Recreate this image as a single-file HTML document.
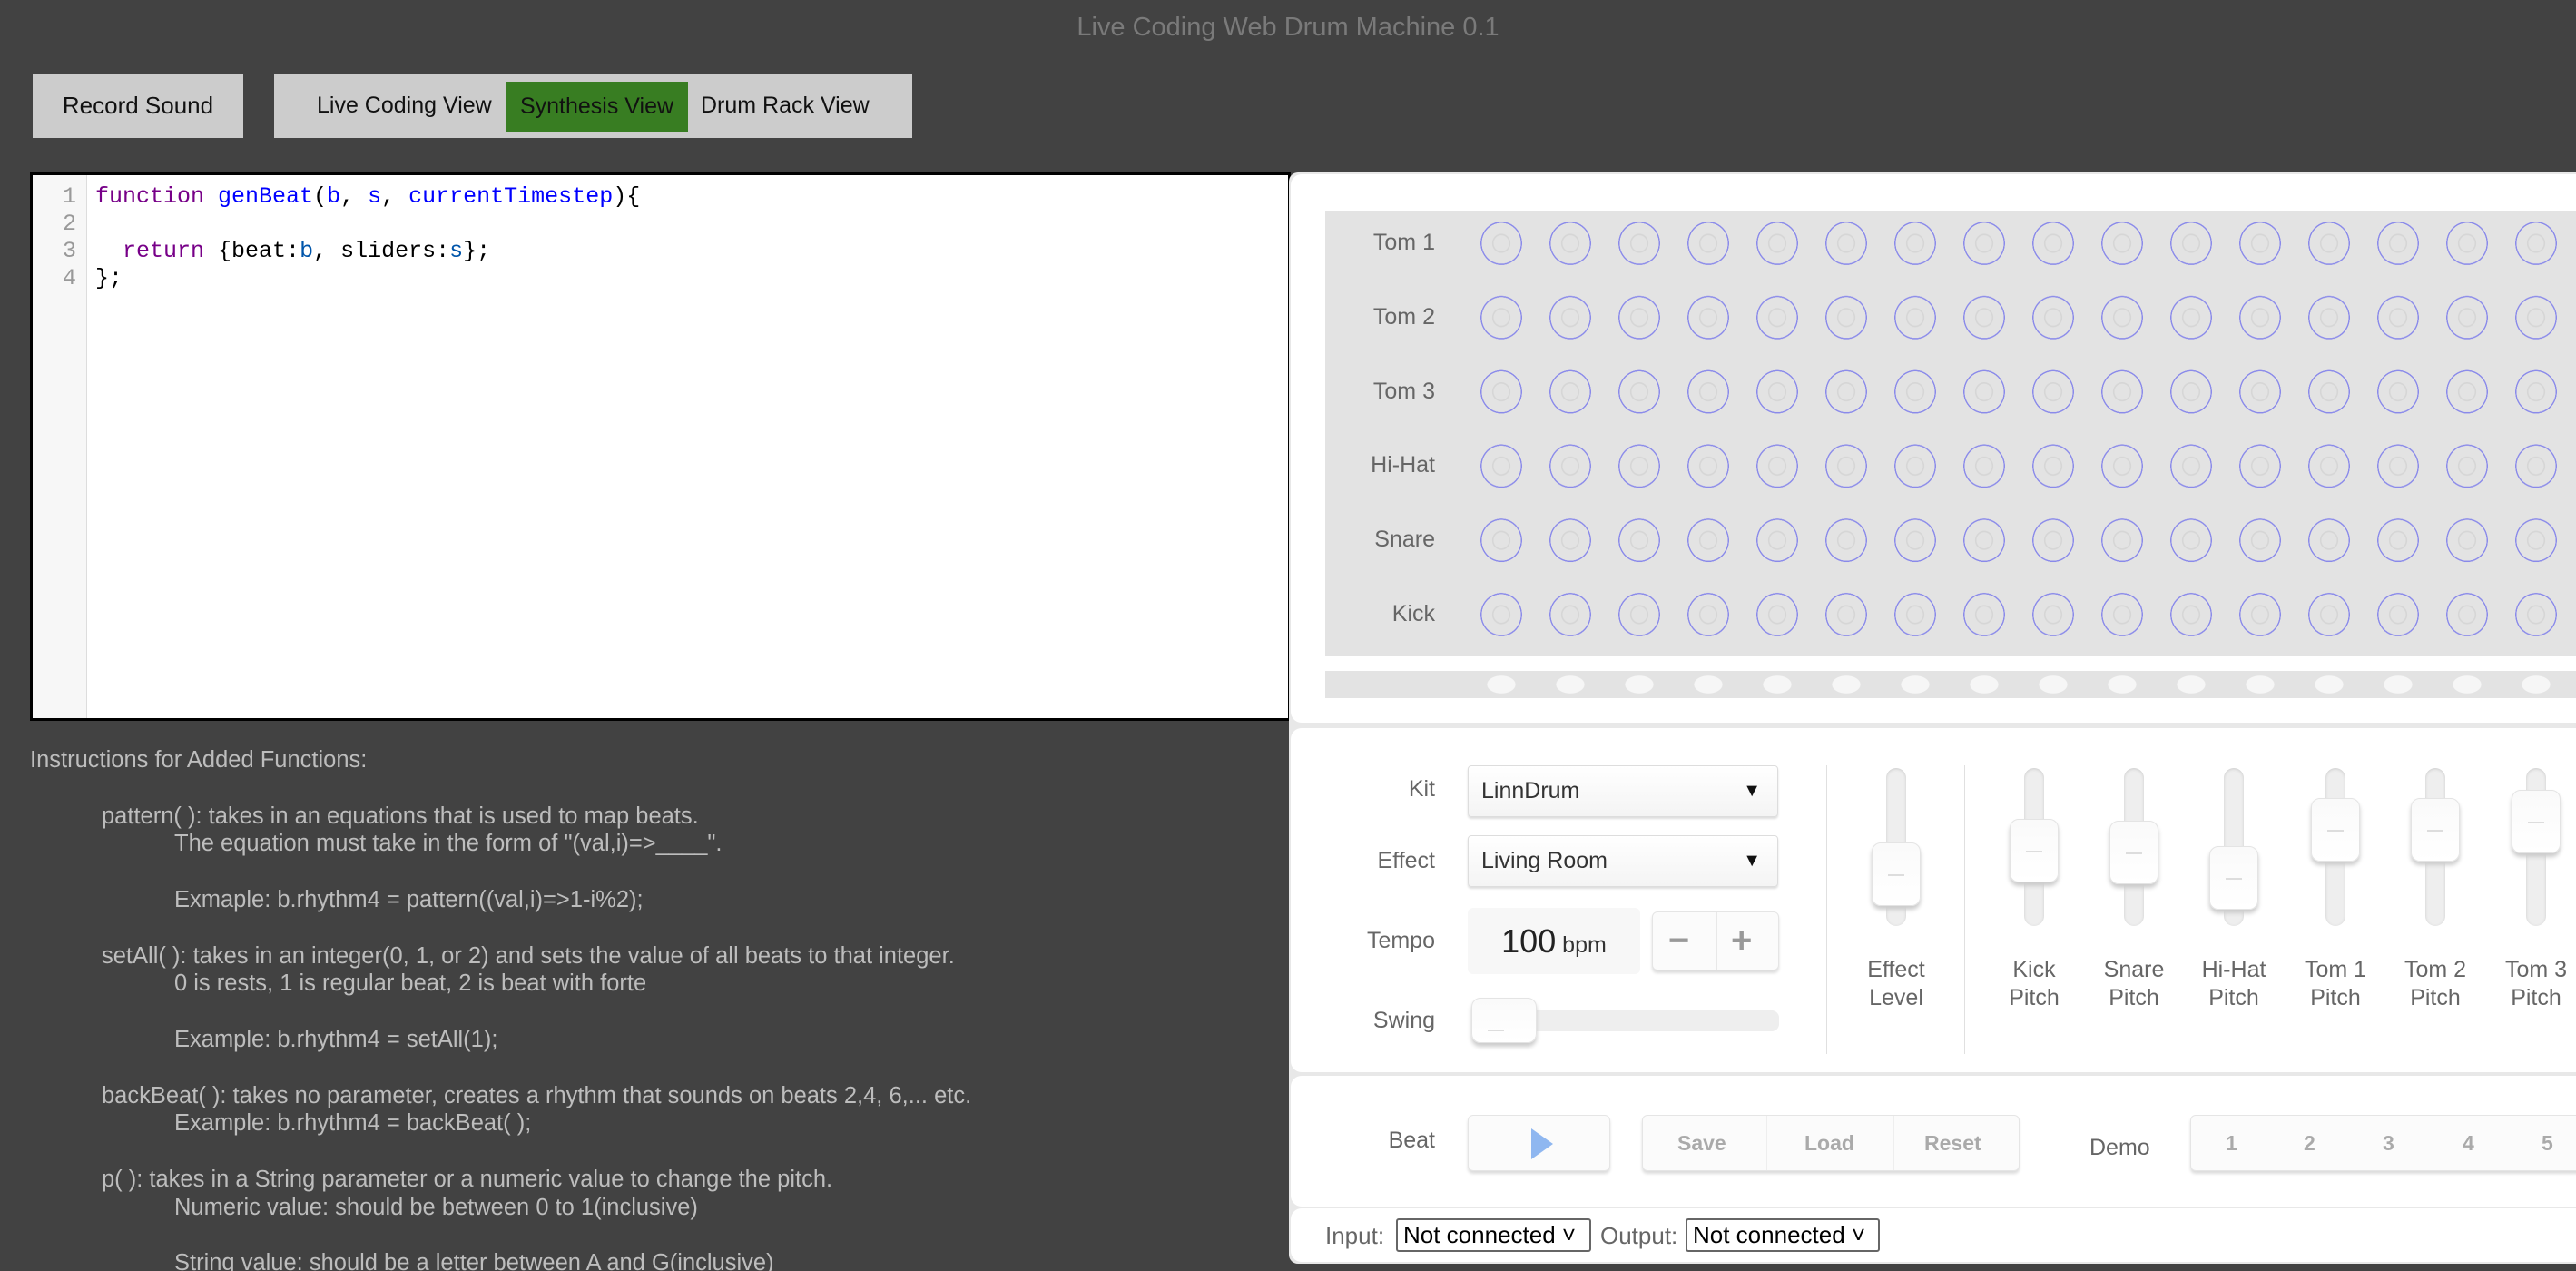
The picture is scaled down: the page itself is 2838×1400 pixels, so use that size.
<!DOCTYPE html>
<html><head><meta charset="utf-8"><style>
*{box-sizing:border-box;margin:0;padding:0}
html,body{width:2838px;height:1400px;overflow:hidden}
body{background:#424242;position:relative;font-family:"Liberation Sans",sans-serif}
.a{position:absolute}
.title{left:0;width:2838px;top:14px;text-align:center;color:#7a7a7a;font-size:29px;letter-spacing:0px}
.btn{background:#ccc;color:#111;font-size:26px}
.ed{left:33px;top:190px;width:1389px;height:604px;background:#fff;border:3px solid #000}
.gut{left:0;top:0;width:60px;height:100%;background:#f7f7f7;border-right:1px solid #ddd}
.code{font-family:"Liberation Mono",monospace;font-size:25px;line-height:30px}
.ln{color:#999;text-align:right;width:48px;left:0}
.kw{color:#708}.df{color:#00f}.v2{color:#05a}
.ins{left:33px;top:822px;color:#bdbdbd;font-size:25.5px;line-height:30.8px;white-space:nowrap}
.ins div{height:30.8px}
.i1{padding-left:79px}.i2{padding-left:159px}
.panel{background:#fff;border-radius:12px;left:1422px;width:1440px}
.lab{color:#666;font-size:25px;text-align:right;width:150px;left:1431px}
.sel{background:linear-gradient(#fff,#f4f4f4);border:1px solid #ddd;border-radius:4px;box-shadow:0 2px 2px #ddd;font-size:25px;color:#333;padding-left:14px;line-height:54px}
.sel:after{content:"▼";position:absolute;right:18px;top:0;font-size:20px;color:#111}
.trk{width:22px;height:174px;top:846px;background:#eee;border-radius:11px;box-shadow:inset 0 1px 3px #ccc}
.kn{width:54px;height:70px;background:linear-gradient(#fafafa,#fff);border:1px solid #e4e4e4;border-radius:10px;box-shadow:0 4px 5px #ccc}
.kn:after{content:"";position:absolute;left:17px;width:18px;top:34px;height:2px;background:#ddd}
.sl{color:#666;font-size:25px;text-align:center;width:110px;line-height:31px}
.grp{background:#fbfbfb;border:1px solid #e5e5e5;border-radius:6px;box-shadow:0 3px 3px #ddd;color:#aaa;font-weight:bold;font-size:23px}
</style></head><body>
<div class="a title">Live Coding Web Drum Machine 0.1</div>
<div class="a btn" style="left:36px;top:81px;width:232px;height:71px;line-height:71px;text-align:center">Record Sound</div>
<div class="a btn" style="left:302px;top:81px;width:703px;height:71px"></div>
<div class="a btn" style="left:349px;top:81px;line-height:71px;background:none;font-size:25px">Live Coding View</div>
<div class="a" style="left:557px;top:90px;width:201px;height:55px;background:#387d22;color:#111;font-size:25px;line-height:55px;text-align:center">Synthesis View</div>
<div class="a btn" style="left:772px;top:81px;line-height:71px;background:none;font-size:25px">Drum Rack View</div>

<div class="a ed">
<div class="a gut"></div>
<div class="a code ln" style="top:9px">1<br>2<br>3<br>4</div>
<div class="a code" style="left:69px;top:9px;white-space:pre"><span class="kw">function</span> <span class="df">genBeat</span>(<span class="df">b</span>, <span class="df">s</span>, <span class="df">currentTimestep</span>){

  <span class="kw">return</span> {beat:<span class="v2">b</span>, sliders:<span class="v2">s</span>};
};</div>
</div>

<div class="a ins"><div>Instructions for Added Functions:</div><div></div><div class="i1">pattern( ): takes in an equations that is used to map beats.</div><div class="i2">The equation must take in the form of "(val,i)=&gt;____".</div><div></div><div class="i2">Exmaple: b.rhythm4 = pattern((val,i)=&gt;1-i%2);</div><div></div><div class="i1">setAll( ): takes in an integer(0, 1, or 2) and sets the value of all beats to that integer.</div><div class="i2">0 is rests, 1 is regular beat, 2 is beat with forte</div><div></div><div class="i2">Example: b.rhythm4 = setAll(1);</div><div></div><div class="i1">backBeat( ): takes no parameter, creates a rhythm that sounds on beats 2,4, 6,... etc.</div><div class="i2">Example: b.rhythm4 = backBeat( );</div><div></div><div class="i1">p( ): takes in a String parameter or a numeric value to change the pitch.</div><div class="i2">Numeric value: should be between 0 to 1(inclusive)</div><div></div><div class="i2">String value: should be a letter between A and G(inclusive)</div></div>

<div class="a" style="left:1420px;top:190px;width:1418px;height:1202px;background:#e8e8e8;border-radius:10px 0 0 10px"></div>
<div class="a panel" style="top:192px;height:604px"></div>
<div class="a" style="left:1460px;top:232px;width:1378px;height:491px;background:#e3e3e3"></div>
<div class="a" style="left:1616px;top:227px;width:1222px;height:491px;background:radial-gradient(ellipse 23px 24px at 38px 41px,transparent 36%,#d6d6d6 38%,#d6d6d6 43%,transparent 45%,transparent 93%,#8a8aea 94%,#8a8aea 99%,transparent 100%);background-size:76px 81.8px"></div>
<div class="a lab" style="top:253px">Tom 1</div>
<div class="a lab" style="top:335px">Tom 2</div>
<div class="a lab" style="top:417px">Tom 3</div>
<div class="a lab" style="top:498px">Hi-Hat</div>
<div class="a lab" style="top:580px">Snare</div>
<div class="a lab" style="top:662px">Kick</div>
<div class="a" style="left:1460px;top:739px;width:1378px;height:30px;background:#e3e3e3"></div>
<div class="a" style="left:1616px;top:744px;width:1222px;height:20px;background:radial-gradient(ellipse 16px 10px at 38px 10px,#f6f6f6 95%,transparent 100%);background-size:76px 20px"></div>

<div class="a panel" style="top:802px;height:379px"></div>
<div class="a lab" style="top:855px">Kit</div>
<div class="a lab" style="top:934px">Effect</div>
<div class="a lab" style="top:1022px">Tempo</div>
<div class="a lab" style="top:1110px">Swing</div>
<div class="a sel" style="left:1617px;top:843px;width:342px;height:57px">LinnDrum</div>
<div class="a sel" style="left:1617px;top:920px;width:342px;height:57px">Living Room</div>
<div class="a" style="left:1617px;top:1000px;width:190px;height:73px;background:#f7f7f7;border-radius:6px;color:#222;font-size:36px;line-height:73px;text-align:center">100<span style="font-size:25px;color:#333"> bpm</span></div>
<div class="a grp" style="left:1820px;top:1004px;width:140px;height:65px;color:#999;font-size:40px;line-height:62px"><span class="a" style="left:17px">−</span><span class="a" style="left:70px;top:0;width:1px;height:63px;background:#e8e8e8"></span><span class="a" style="left:86px">+</span></div>
<div class="a" style="left:1621px;top:1113px;width:339px;height:23px;background:#eee;border-radius:8px"></div>
<div class="a kn" style="left:1621px;top:1099px;width:72px;height:50px"></div>
<div class="a" style="left:2012px;top:843px;width:1px;height:318px;background:#e0e0e0"></div>
<div class="a" style="left:2164px;top:843px;width:1px;height:318px;background:#e0e0e0"></div>

<div class="a trk" style="left:2078px"></div><div class="a kn" style="left:2062px;top:928px"></div>
<div class="a trk" style="left:2230px"></div><div class="a kn" style="left:2214px;top:902px"></div>
<div class="a trk" style="left:2340px"></div><div class="a kn" style="left:2324px;top:904px"></div>
<div class="a trk" style="left:2450px"></div><div class="a kn" style="left:2434px;top:932px"></div>
<div class="a trk" style="left:2562px"></div><div class="a kn" style="left:2546px;top:879px"></div>
<div class="a trk" style="left:2672px"></div><div class="a kn" style="left:2656px;top:879px"></div>
<div class="a trk" style="left:2783px"></div><div class="a kn" style="left:2767px;top:870px"></div>

<div class="a sl" style="left:2034px;top:1053px">Effect<br>Level</div>
<div class="a sl" style="left:2186px;top:1053px">Kick<br>Pitch</div>
<div class="a sl" style="left:2296px;top:1053px">Snare<br>Pitch</div>
<div class="a sl" style="left:2406px;top:1053px">Hi-Hat<br>Pitch</div>
<div class="a sl" style="left:2518px;top:1053px">Tom 1<br>Pitch</div>
<div class="a sl" style="left:2628px;top:1053px">Tom 2<br>Pitch</div>
<div class="a sl" style="left:2739px;top:1053px">Tom 3<br>Pitch</div>

<div class="a panel" style="top:1185px;height:144px"></div>
<div class="a lab" style="top:1242px">Beat</div>
<div class="a grp" style="left:1617px;top:1228px;width:157px;height:62px"><svg class="a" style="left:68px;top:14px" width="26" height="34"><path d="M1 0 L25 17 L1 34Z" fill="#8fb7f0"/></svg></div>
<div class="a grp" style="left:1809px;top:1228px;width:416px;height:62px;line-height:60px"><span class="a" style="left:38px">Save</span><span class="a" style="left:136px;top:0;width:1px;height:60px;background:#eee"></span><span class="a" style="left:178px">Load</span><span class="a" style="left:276px;top:0;width:1px;height:60px;background:#eee"></span><span class="a" style="left:310px">Reset</span></div>
<div class="a" style="left:2302px;top:1250px;color:#666;font-size:25px">Demo</div>
<div class="a grp" style="left:2413px;top:1228px;width:440px;height:62px;line-height:60px"><span class="a" style="left:38px">1</span><span class="a" style="left:124px">2</span><span class="a" style="left:211px">3</span><span class="a" style="left:299px">4</span><span class="a" style="left:386px">5</span></div>

<div class="a panel" style="top:1331px;height:59px"></div>
<div class="a" style="left:1460px;top:1344px;color:#666;font-size:26px;line-height:34px">Input:</div>
<div class="a" style="left:1538px;top:1342px;width:215px;height:37px;border:2px solid #666;border-radius:3px;font-size:26px;line-height:33px;padding-left:6px;color:#000">Not connected ˅</div>
<div class="a" style="left:1763px;top:1344px;color:#666;font-size:26px;line-height:34px">Output:</div>
<div class="a" style="left:1857px;top:1342px;width:214px;height:37px;border:2px solid #666;border-radius:3px;font-size:26px;line-height:33px;padding-left:6px;color:#000">Not connected ˅</div>
</body></html>
